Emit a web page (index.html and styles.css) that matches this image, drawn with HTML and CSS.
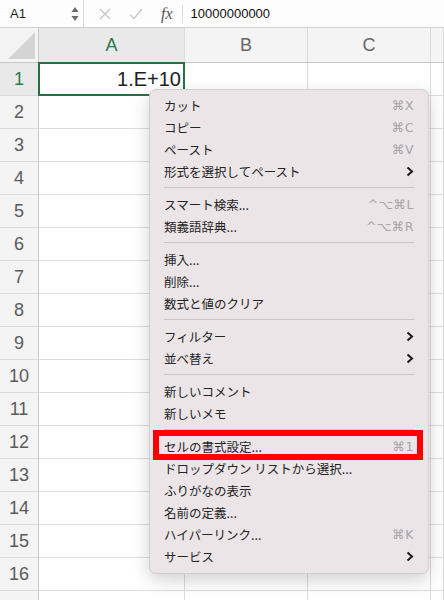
FILE: index.html
```html
<!DOCTYPE html>
<html lang="ja">

<head>
    <meta charset="UTF-8" />
    <title>Excel - セルの書式設定</title>
    <link rel="stylesheet" href="styles.css">
</head>

<body>
    <div class="formula-bar">
        <div class="name-box">
            <span>A1</span>
            <span class="spinner">
                <svg width="8" height="16" viewBox="0 0 8 16">
                    <path d="M4 1 L7.5 6 L0.5 6 Z" fill="#6b6b6b" />
                    <path d="M4 15 L7.5 10 L0.5 10 Z" fill="#6b6b6b" />
                </svg>
            </span>
        </div>
        <div class="fx-tools">
            <svg width="12" height="12" viewBox="0 0 12 12">
                <path d="M1 1 L11 11 M11 1 L1 11" stroke="#c8c8c8" stroke-width="1.4" />
            </svg>
            <svg width="14" height="12" viewBox="0 0 14 12">
                <path d="M1 6.5 L5 10.5 L13 1" stroke="#c8c8c8" stroke-width="1.4" fill="none" />
            </svg>
            <span class="fx">fx</span>
        </div>
        <div class="formula">10000000000</div>
    </div>

    <div class="sheet">
        <div class="corner"><span class="tri"></span></div>
        <div class="col-head active">A</div>
        <div class="col-head">B</div>
        <div class="col-head">C</div>
        <div class="col-head"></div>
    </div>

    <div class="rows" id="rows"></div>

    <div class="menu">
        <div class="item"><span>カット</span><span class="key">⌘X</span></div>
        <div class="item"><span>コピー</span><span class="key">⌘C</span></div>
        <div class="item"><span>ペースト</span><span class="key">⌘V</span></div>
        <div class="item"><span>形式を選択してペースト</span><span class="chev"></span></div>
        <div class="sep"></div>
        <div class="item"><span>スマート検索...</span><span class="key">^⌥⌘L</span></div>
        <div class="item"><span>類義語辞典...</span><span class="key">^⌥⌘R</span></div>
        <div class="sep"></div>
        <div class="item"><span>挿入...</span></div>
        <div class="item"><span>削除...</span></div>
        <div class="item"><span>数式と値のクリア</span></div>
        <div class="sep"></div>
        <div class="item"><span>フィルター</span><span class="chev"></span></div>
        <div class="item"><span>並べ替え</span><span class="chev"></span></div>
        <div class="sep"></div>
        <div class="item"><span>新しいコメント</span></div>
        <div class="item"><span>新しいメモ</span></div>
        <div class="sep"></div>
        <div class="item marked"><span>セルの書式設定...</span><span class="key">⌘1</span></div>
        <div class="item"><span>ドロップダウン リストから選択...</span></div>
        <div class="item"><span>ふりがなの表示</span></div>
        <div class="item"><span>名前の定義...</span></div>
        <div class="item"><span>ハイパーリンク...</span><span class="key">⌘K</span></div>
        <div class="item"><span>サービス</span><span class="chev"></span></div>
    </div>

    <script>
        const rows = document.getElementById("rows");
        const chevron = '<svg width="8" height="11" viewBox="0 0 8 11"><path d="M1.5 1.5 L6 5.5 L1.5 9.5" stroke="#1a1a1a" stroke-width="2" fill="none"/></svg>';

        // 17-я строка видна только краем, номер не показываем
        for (let i = 1; i <= 17; i++) {
            const row = document.createElement("div");
            row.className = "row";
            row.innerHTML =
                `<div class="row-head${i === 1 ? " active" : ""}">${i <= 16 ? i : ""}</div>` +
                `<div class="cell${i === 1 ? " selected" : ""}">${i === 1 ? "1.E+10" : ""}</div>` +
                `<div class="cell"></div><div class="cell"></div><div class="cell"></div>`;
            rows.appendChild(row);
        }

        document.querySelectorAll(".chev").forEach((el) => (el.innerHTML = chevron));
    </script>
</body>

</html>
```

FILE: styles.css
```css
/* Общие стили */
body {
    margin: 0;
    width: 444px;
    height: 600px;
    overflow: hidden;
    position: relative;
    background: #fff;
    font-family: "Liberation Sans", "Noto Sans CJK JP", sans-serif;
    color: #222;
}

/* Строка формул */
.formula-bar {
    display: flex;
    align-items: center;
    height: 27px;
    border-bottom: 1px solid #cfcfcf;
    background: #fdfdfd;
    font-size: 13px;
}

.name-box {
    display: flex;
    align-items: center;
    justify-content: space-between;
    width: 84px;
    height: 100%;
    box-sizing: border-box;
    padding: 0 4px 0 10px;
    border-right: 1px solid #d6d6d6;
    color: #1d1d1d;
}

.spinner {
    display: flex;
}

.fx-tools {
    display: flex;
    align-items: center;
    gap: 18px;
    height: 100%;
    padding: 0 8px 0 15px;
}

.fx {
    font-family: "Liberation Serif", serif;
    font-style: italic;
    font-size: 16px;
    color: #555;
    padding-right: 9px;
    border-right: 1px solid #dcdcdc;
    line-height: 18px;
}

.formula {
    color: #111;
}

/* Таблица */
.sheet,
.row {
    display: grid;
    grid-template-columns: 39px 146px 123px 123px 1fr;
}

.sheet {
    height: 35px;
    background: #f4f4f4;
    border-bottom: 1px solid #c6c6c6;
    box-sizing: border-box;
}

.corner {
    position: relative;
    border-right: 1px solid #c6c6c6;
}

.tri {
    position: absolute;
    right: 3px;
    bottom: 3px;
    width: 0;
    height: 0;
    border-left: 27px solid transparent;
    border-bottom: 27px solid #d4d4d4;
}

.col-head {
    display: flex;
    align-items: center;
    justify-content: center;
    font-size: 18px;
    color: #666;
    border-right: 1px solid #dcdcdc;
}

.col-head.active {
    background: #e9e9e9;
    color: #2c7a4b;
}

.row {
    height: 33px;
}

.row-head {
    display: flex;
    align-items: center;
    justify-content: center;
    font-size: 18px;
    color: #5a5a5a;
    background: #f4f4f4;
    border-right: 1px solid #c6c6c6;
    border-bottom: 1px solid #dcdcdc;
}

.row-head.active {
    background: #e9e9e9;
    color: #2c7a4b;
}

.cell {
    border-right: 1px solid #dcdcdc;
    border-bottom: 1px solid #dcdcdc;
    font-size: 20px;
    display: flex;
    align-items: center;
    justify-content: flex-end;
    padding-right: 2px;
}

.cell.selected {
    border: 2px solid #2b6e45;
    margin: -1px 0 0 -1px;
}

/* Контекстное меню */
.menu {
    position: absolute;
    left: 149px;
    top: 89px;
    width: 280px;
    box-sizing: border-box;
    padding: 4px 0 6px;
    background: #ebe5e7;
    border: 1px solid #d3cdd0;
    border-radius: 7px;
    box-shadow: 0 6px 18px rgba(0, 0, 0, 0.18);
    font-family: "Noto Sans CJK JP", sans-serif;
    font-size: 12.5px;
}

.item {
    display: flex;
    align-items: center;
    justify-content: space-between;
    height: 22px;
    padding: 0 14px;
    color: #242424;
}

.key {
    font-family: "DejaVu Sans", "Noto Sans CJK JP", sans-serif;
    color: #a8a4a6;
    font-size: 12.5px;
    letter-spacing: 0.5px;
}

.chev {
    display: flex;
}

.sep {
    height: 1px;
    margin: 5px 14px;
    background: #cac5c7;
}

.item.marked {
    position: relative;
}

.item.marked::after {
    content: "";
    position: absolute;
    left: 3px;
    right: 5px;
    top: -5px;
    bottom: -3px;
    border: 6px solid #ff0000;
}
```
